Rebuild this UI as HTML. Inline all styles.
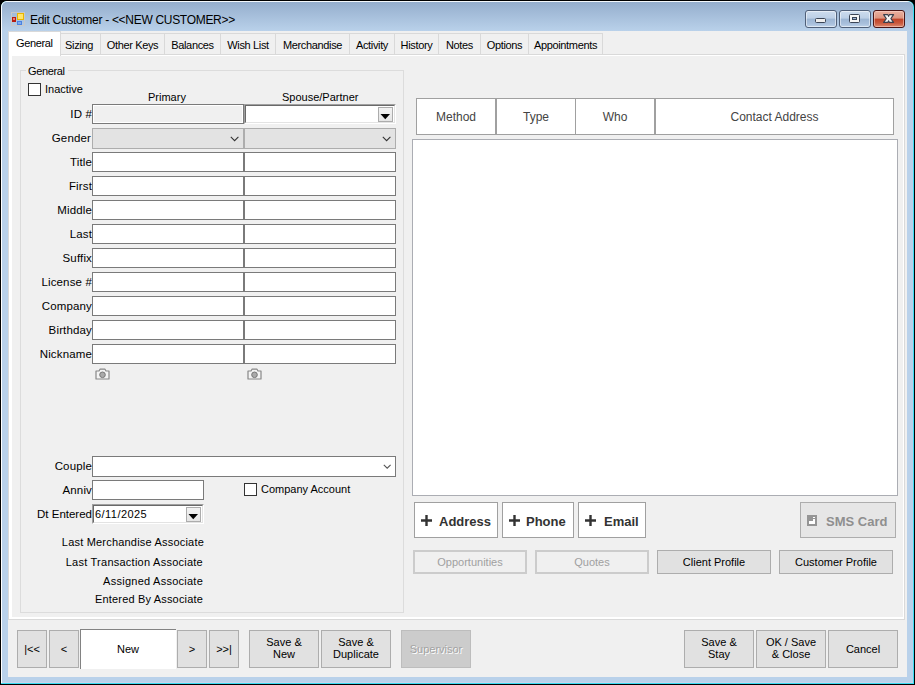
<!DOCTYPE html>
<html><head><meta charset="utf-8">
<style>
*{box-sizing:border-box;margin:0;padding:0}
html,body{width:915px;height:685px;overflow:hidden;background:#000}
body{position:relative;font-family:"Liberation Sans",sans-serif;font-size:11px;color:#000}
div,span,svg{position:absolute}
.t{white-space:pre;line-height:11px}
.r{text-align:right}
.c{text-align:center}
.tab{top:33px;height:22px;border:1px solid #d9d9d9;background:#f0f0f0}
.tab span{left:0;right:0;top:6px;text-align:center;white-space:pre;line-height:11px;letter-spacing:-0.35px}
.tb{background:#fff;border:1px solid #7a7a7a;height:20px}
.cb{background:#e3e3e3;border:1px solid #adadad;height:21px}
.btn{background:#e1e1e1;border:1px solid #adadad;height:38px;top:630px}
.btn span{left:0;right:0;text-align:center;white-space:pre;line-height:11px}
.lbl{white-space:pre;line-height:11px;text-align:right;width:80px;font-size:11.5px;letter-spacing:0.15px}
</style></head>
<body>
<!-- window frame -->
<div style="left:1px;top:1px;width:913px;height:683px;background:#3adcf2;border-radius:6px 6px 0 0"></div>
<div style="left:1px;top:1px;width:912px;height:682px;background:#b9d1ea;border-radius:6px 6px 0 0;border-left:1px solid #fff;border-top:1px solid #f4f8fc"></div>
<div style="left:2px;top:2px;width:911px;height:29px;background:linear-gradient(#95aecd,#b9d1ea);border-radius:5px 5px 0 0"></div>
<div style="left:2px;top:682px;width:911px;height:1px;background:#c9d3ea"></div>

<!-- title icon -->
<svg style="left:11px;top:12px" width="15" height="14" viewBox="0 0 15 14">
<rect x="0.5" y="0.5" width="13" height="13" fill="none" stroke="#c8c8c8" stroke-width="1"/>
<rect x="6" y="1" width="7" height="7" fill="#e9b500"/>
<rect x="7" y="2" width="5" height="5" fill="#ffe46a"/>
<rect x="1" y="5" width="4" height="5" fill="#b81c10"/>
<rect x="2" y="6" width="2" height="2" fill="#f07a70"/>
<rect x="6" y="9" width="5" height="4" fill="#4a82e0"/>
<rect x="7" y="10" width="3" height="2" fill="#7eaaf0"/>
</svg>
<div class="t" style="left:30px;top:14px;font-size:12px;line-height:12px;letter-spacing:-0.3px;color:#000">Edit Customer - &lt;&lt;NEW CUSTOMER&gt;&gt;</div>

<!-- title buttons -->
<div style="left:805px;top:10px;width:32px;height:18px;border:1px solid #4f5f78;border-radius:3px;background:linear-gradient(#cddcee 0%,#bccfe6 45%,#9cb5d3 50%,#a9c0dc 80%,#bfd3ea 100%);box-shadow:inset 0 0 0 1px rgba(255,255,255,0.5)"></div>
<div style="left:839px;top:10px;width:32px;height:18px;border:1px solid #4f5f78;border-radius:3px;background:linear-gradient(#cddcee 0%,#bccfe6 45%,#9cb5d3 50%,#a9c0dc 80%,#bfd3ea 100%);box-shadow:inset 0 0 0 1px rgba(255,255,255,0.5)"></div>
<div style="left:873px;top:10px;width:32px;height:18px;border:1px solid #4a1414;border-radius:3px;background:linear-gradient(#eab0a0 0%,#dd9580 45%,#c04228 50%,#c9583c 75%,#dc8a70 100%);box-shadow:inset 0 0 0 1px rgba(255,220,210,0.5)"></div>
<svg style="left:805px;top:10px" width="100" height="18" viewBox="0 0 100 18">
<rect x="10.5" y="8.5" width="10" height="4" rx="1" fill="#eeeeee" stroke="#3b4556" stroke-width="1"/>
<rect x="44.5" y="4.5" width="10" height="8" rx="1" fill="#f6f6f6" stroke="#3b4556" stroke-width="1"/>
<rect x="47.5" y="7.5" width="4" height="2" fill="#9db6d6" stroke="#3b4556" stroke-width="1"/>
<path d="M78.6 4.6 L82.8 4.6 L83.6 6.4 L84.4 4.6 L88.6 4.6 L85.9 8.6 L88.6 12.4 L84.4 12.4 L83.6 10.7 L82.8 12.4 L78.6 12.4 L81.3 8.6 Z" fill="#f4f4f4" stroke="#3a3f4c" stroke-width="1.1" stroke-linejoin="round"/>
</svg>

<!-- client -->
<div style="left:8px;top:31px;width:899px;height:646px;background:#f0f0f0"></div>

<!-- tab page -->
<div style="left:8px;top:54px;width:897px;height:566px;border:1px solid #d9d9d9;background:#fff"></div>
<div style="left:12px;top:56px;width:891px;height:561px;background:#f0f0f0"></div>

<!-- tabs -->
<div class="tab" style="left:60px;width:41px"><span style="right:3px">Sizing</span></div>
<div class="tab" style="left:100px;width:65px"><span>Other Keys</span></div>
<div class="tab" style="left:164px;width:57px"><span>Balances</span></div>
<div class="tab" style="left:220px;width:56px"><span>Wish List</span></div>
<div class="tab" style="left:275px;width:75px"><span>Merchandise</span></div>
<div class="tab" style="left:349px;width:46px"><span>Activity</span></div>
<div class="tab" style="left:394px;width:45px"><span>History</span></div>
<div class="tab" style="left:438px;width:43px"><span>Notes</span></div>
<div class="tab" style="left:480px;width:49px"><span>Options</span></div>
<div class="tab" style="left:528px;width:75px"><span>Appointments</span></div>
<div style="left:8px;top:31px;width:53px;height:25px;border:1px solid #d9d9d9;border-bottom:none;background:#fff"></div>
<div class="t" style="left:16px;top:38px;letter-spacing:-0.35px">General</div>

<!-- group box -->
<div style="left:20px;top:70px;width:384px;height:543px;border:1px solid #dcdcdc"></div>
<div style="left:26px;top:64px;width:42px;height:12px;background:#f0f0f0"></div>
<div class="t" style="left:28px;top:66px;letter-spacing:-0.35px">General</div>

<div style="left:28px;top:83px;width:13px;height:13px;border:1px solid #333;background:#fff"></div>
<div class="t" style="left:45px;top:84px">Inactive</div>
<div class="t" style="left:148px;top:92px">Primary</div>
<div class="t" style="left:282px;top:92px">Spouse/Partner</div>

<!-- rows -->
<div class="lbl" style="left:12px;top:109px">ID #</div>
<div style="left:92px;top:104px;width:152px;height:20px;border:1px solid #7a7a7a;background:#f0f0f0;box-shadow:inset 0 0 0 1px #fff"></div>
<div style="left:244px;top:104px;width:152px;height:20px;border-top:1px solid #a0a0a0;border-left:1px solid #a0a0a0;border-right:1px solid #fff;border-bottom:1px solid #fff;background:#fff"></div>
<div style="left:245px;top:105px;width:150px;height:18px;border-top:1px solid #696969;border-left:1px solid #696969;border-right:1px solid #e3e3e3;border-bottom:1px solid #e3e3e3"></div>
<div style="left:378px;top:107px;width:15px;height:15px;border:1px solid #acacac;background:linear-gradient(#f2f2f2,#e5e5e5)"></div>
<svg style="left:380px;top:113px" width="11" height="7" viewBox="0 0 11 7"><path d="M0.5 1 L10 1 L5.25 6.2 Z" fill="#000"/></svg>

<div class="lbl" style="left:11px;top:133px">Gender</div>
<div class="cb" style="left:92px;top:128px;width:152px"></div>
<div class="cb" style="left:244px;top:128px;width:152px"></div>
<svg style="left:230px;top:136px" width="10" height="6" viewBox="0 0 10 6"><path d="M0.8 0.8 L4.6 4.6 L8.4 0.8" fill="none" stroke="#333" stroke-width="1.1"/></svg>
<svg style="left:382px;top:136px" width="10" height="6" viewBox="0 0 10 6"><path d="M0.8 0.8 L4.6 4.6 L8.4 0.8" fill="none" stroke="#333" stroke-width="1.1"/></svg>

<div class="lbl" style="left:12px;top:157px">Title</div>
<div class="tb" style="left:92px;top:152px;width:152px"></div>
<div class="tb" style="left:244px;top:152px;width:152px"></div>
<div class="lbl" style="left:12px;top:181px">First</div>
<div class="tb" style="left:92px;top:176px;width:152px"></div>
<div class="tb" style="left:244px;top:176px;width:152px"></div>
<div class="lbl" style="left:12px;top:205px">Middle</div>
<div class="tb" style="left:92px;top:200px;width:152px"></div>
<div class="tb" style="left:244px;top:200px;width:152px"></div>
<div class="lbl" style="left:12px;top:229px">Last</div>
<div class="tb" style="left:92px;top:224px;width:152px"></div>
<div class="tb" style="left:244px;top:224px;width:152px"></div>
<div class="lbl" style="left:12px;top:253px">Suffix</div>
<div class="tb" style="left:92px;top:248px;width:152px"></div>
<div class="tb" style="left:244px;top:248px;width:152px"></div>
<div class="lbl" style="left:12px;top:277px">License #</div>
<div class="tb" style="left:92px;top:272px;width:152px"></div>
<div class="tb" style="left:244px;top:272px;width:152px"></div>
<div class="lbl" style="left:12px;top:301px">Company</div>
<div class="tb" style="left:92px;top:296px;width:152px"></div>
<div class="tb" style="left:244px;top:296px;width:152px"></div>
<div class="lbl" style="left:12px;top:325px">Birthday</div>
<div class="tb" style="left:92px;top:320px;width:152px"></div>
<div class="tb" style="left:244px;top:320px;width:152px"></div>
<div class="lbl" style="left:12px;top:349px">Nickname</div>
<div class="tb" style="left:92px;top:344px;width:152px"></div>
<div class="tb" style="left:244px;top:344px;width:152px"></div>

<!-- camera icons -->
<svg style="left:95px;top:368px" width="15" height="12" viewBox="0 0 15 12">
<path d="M1 3 L4 3 L5 1.2 L10 1.2 L11 3 L14 3 L14 11 L1 11 Z" fill="#f4f4f4" stroke="#888" stroke-width="1.2" stroke-linejoin="round"/>
<circle cx="7.5" cy="6.8" r="2.8" fill="#aaa" stroke="#777" stroke-width="1"/>
</svg>
<svg style="left:247px;top:368px" width="15" height="12" viewBox="0 0 15 12">
<path d="M1 3 L4 3 L5 1.2 L10 1.2 L11 3 L14 3 L14 11 L1 11 Z" fill="#f4f4f4" stroke="#888" stroke-width="1.2" stroke-linejoin="round"/>
<circle cx="7.5" cy="6.8" r="2.8" fill="#aaa" stroke="#777" stroke-width="1"/>
</svg>

<!-- lower -->
<div class="lbl" style="left:12px;top:461px">Couple</div>
<div class="tb" style="left:92px;top:456px;width:304px;height:21px"></div>
<svg style="left:383px;top:464px" width="10" height="6" viewBox="0 0 10 6"><path d="M0.8 0.8 L4.2 4.2 L7.6 0.8" fill="none" stroke="#555" stroke-width="1.1"/></svg>
<div class="lbl" style="left:12px;top:485px">Anniv</div>
<div class="tb" style="left:92px;top:480px;width:112px"></div>
<div style="left:244px;top:483px;width:13px;height:13px;border:1px solid #333;background:#fff"></div>
<div class="t" style="left:261px;top:484px">Company Account</div>
<div class="lbl" style="left:12px;top:509px;letter-spacing:0">Dt Entered</div>
<div style="left:92px;top:504px;width:112px;height:20px;border-top:1px solid #a0a0a0;border-left:1px solid #a0a0a0;border-right:1px solid #fff;border-bottom:1px solid #fff;background:#fff"></div>
<div style="left:93px;top:505px;width:110px;height:18px;border-top:1px solid #696969;border-left:1px solid #696969;border-right:1px solid #e3e3e3;border-bottom:1px solid #e3e3e3"></div>
<div class="t" style="left:95px;top:509px;letter-spacing:0.45px">6/11/2025</div>
<div style="left:186px;top:507px;width:15px;height:15px;border:1px solid #acacac;background:linear-gradient(#f2f2f2,#e5e5e5)"></div>
<svg style="left:188px;top:513px" width="11" height="7" viewBox="0 0 11 7"><path d="M0.5 1 L10 1 L5.25 6.2 Z" fill="#000"/></svg>

<div class="lbl" style="left:44px;top:537px;width:160px;font-size:11px;letter-spacing:0.2px">Last Merchandise Associate</div>
<div class="lbl" style="left:43px;top:557px;width:160px;font-size:11px;letter-spacing:0.25px">Last Transaction Associate</div>
<div class="lbl" style="left:43px;top:576px;width:160px;font-size:11px;letter-spacing:0.25px">Assigned Associate</div>
<div class="lbl" style="left:43px;top:594px;width:160px;font-size:11px;letter-spacing:0.17px">Entered By Associate</div>

<!-- grid -->
<div style="left:416px;top:98px;width:478px;height:37px;border:1px solid #a0a0a0;background:#fff"></div>
<div style="left:495px;top:99px;width:2px;height:35px;background:#a0a0a0"></div>
<div style="left:575px;top:99px;width:1px;height:35px;background:#a0a0a0"></div>
<div style="left:654px;top:99px;width:2px;height:35px;background:#a0a0a0"></div>
<div class="t c" style="left:417px;top:111px;width:78px;font-size:12px;line-height:12px;color:#444">Method</div>
<div class="t c" style="left:497px;top:111px;width:78px;font-size:12px;line-height:12px;color:#444">Type</div>
<div class="t c" style="left:576px;top:111px;width:78px;font-size:12px;line-height:12px;color:#444">Who</div>
<div class="t c" style="left:656px;top:111px;width:237px;font-size:12px;line-height:12px;color:#444">Contact Address</div>
<div style="left:412px;top:139px;width:486px;height:357px;border:1px solid #abadb3;background:#fff"></div>

<!-- add buttons -->
<div style="left:414px;top:502px;width:84px;height:36px;border:1px solid #a0a0a0;background:#fff"></div>
<div style="left:502px;top:502px;width:72px;height:36px;border:1px solid #a0a0a0;background:#fff"></div>
<div style="left:578px;top:502px;width:68px;height:36px;border:1px solid #a0a0a0;background:#fff"></div>
<svg style="left:420px;top:514px" width="14" height="14" viewBox="0 0 14 14"><path d="M1 6.5 H12 M6.5 1 V12" stroke="#333" stroke-width="2.4"/></svg>
<svg style="left:508px;top:514px" width="14" height="14" viewBox="0 0 14 14"><path d="M1 6.5 H12 M6.5 1 V12" stroke="#333" stroke-width="2.4"/></svg>
<svg style="left:584px;top:514px" width="14" height="14" viewBox="0 0 14 14"><path d="M1 6.5 H12 M6.5 1 V12" stroke="#333" stroke-width="2.4"/></svg>
<div class="t" style="left:439px;top:515px;font-size:13px;line-height:13px;font-weight:bold;color:#333">Address</div>
<div class="t" style="left:526px;top:515px;font-size:13px;line-height:13px;font-weight:bold;color:#333">Phone</div>
<div class="t" style="left:604px;top:515px;font-size:13px;line-height:13px;font-weight:bold;color:#333">Email</div>

<div style="left:800px;top:502px;width:96px;height:36px;border:1px solid #adadad;background:#e6e6e6"></div>
<svg style="left:807px;top:515px" width="10" height="11" viewBox="0 0 10 11">
<rect x="0" y="0" width="10" height="11" fill="#959595"/>
<rect x="2" y="6" width="6" height="3" fill="#fff"/>
<rect x="6" y="4" width="2" height="3" fill="#fff"/>
<rect x="6" y="2" width="2" height="1" fill="#fff"/>
</svg>
<div class="t" style="left:826px;top:515px;font-size:13px;line-height:13px;font-weight:bold;color:#8f8f8f">SMS Card</div>

<div style="left:413px;top:550px;width:114px;height:24px;border:2px solid #cccccc;background:#f0f0f0"></div>
<div class="t c" style="left:413px;top:557px;width:114px;color:#a0a0a0">Opportunities</div>
<div style="left:535px;top:550px;width:114px;height:24px;border:2px solid #cccccc;background:#f0f0f0"></div>
<div class="t c" style="left:535px;top:557px;width:114px;color:#a0a0a0">Quotes</div>
<div style="left:657px;top:550px;width:114px;height:24px;border:1px solid #adadad;background:#e1e1e1"></div>
<div class="t c" style="left:657px;top:557px;width:114px">Client Profile</div>
<div style="left:779px;top:550px;width:114px;height:24px;border:1px solid #adadad;background:#e1e1e1"></div>
<div class="t c" style="left:779px;top:557px;width:114px">Customer Profile</div>

<!-- bottom bar -->
<div class="btn" style="left:17px;width:30px"><span style="top:13px">|&lt;&lt;</span></div>
<div class="btn" style="left:49px;width:30px"><span style="top:13px">&lt;</span></div>
<div style="left:80px;top:629px;width:96px;height:40px;background:#fff;border-top:1px solid #828282;border-left:1px solid #828282"></div>
<div class="t c" style="left:80px;top:644px;width:96px">New</div>
<div class="btn" style="left:177px;width:30px"><span style="top:13px">&gt;</span></div>
<div class="btn" style="left:209px;width:30px"><span style="top:13px">&gt;&gt;|</span></div>
<div class="btn" style="left:249px;width:70px"><span style="top:5px;line-height:12px">Save &amp;
New</span></div>
<div class="btn" style="left:321px;width:70px"><span style="top:5px;line-height:12px">Save &amp;
Duplicate</span></div>
<div class="btn" style="left:401px;width:70px;background:#cccccc;border-color:#bdbdbd"><span style="top:13px;color:#a3a3a3;text-shadow:1px 1px 0 #fff">Supervisor</span></div>
<div class="btn" style="left:684px;width:70px"><span style="top:5px;line-height:12px">Save &amp;
Stay</span></div>
<div class="btn" style="left:756px;width:70px"><span style="top:5px;line-height:12px">OK / Save
&amp; Close</span></div>
<div class="btn" style="left:828px;width:70px"><span style="top:13px">Cancel</span></div>
</body></html>
